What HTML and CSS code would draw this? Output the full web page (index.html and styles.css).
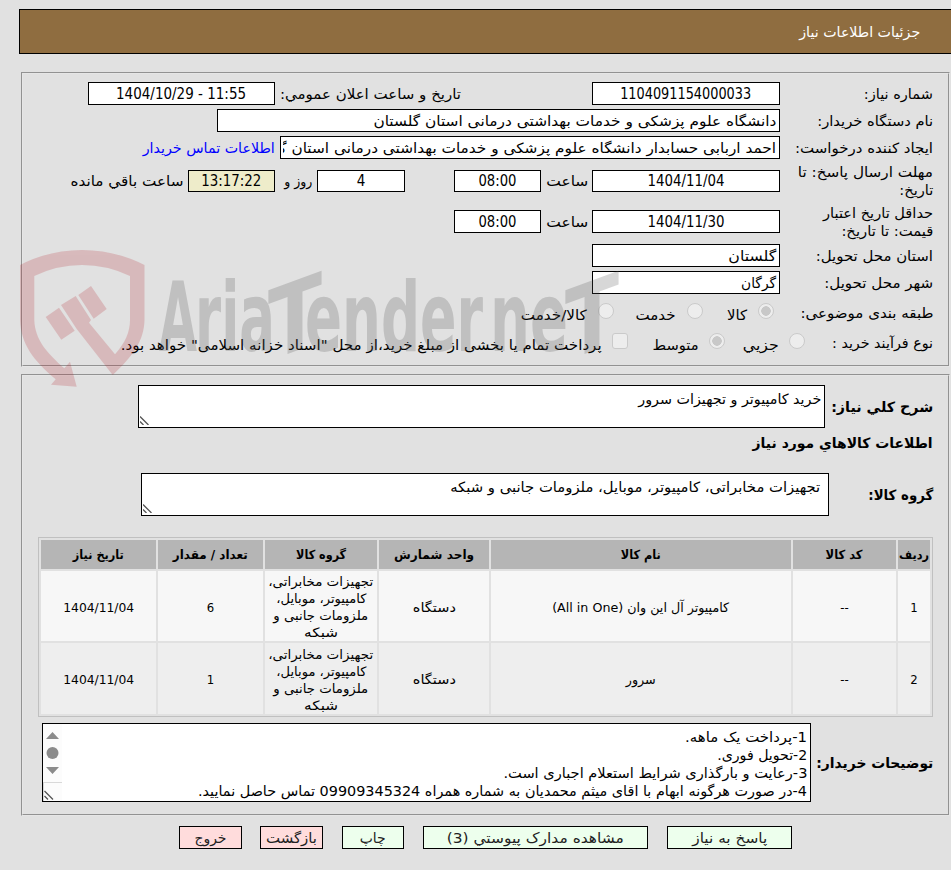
FILE: index.html
```html
<!DOCTYPE html>
<html lang="fa" dir="rtl">
<head>
<meta charset="utf-8">
<title>جزئیات اطلاعات نیاز</title>
<link rel="stylesheet" href="styles.css">
</head>
<body>
<header class="title-bar"><span class="fit" data-w="121">جزئیات اطلاعات نیاز</span></header>

<section class="panel general">
  <div class="row r1">
    <div class="label"><span class="fit" data-w="69">شماره نیاز:</span></div>
    <div class="box w188"><span class="fit" data-w="131">1104091154000033</span></div>
    <div class="caption w317 pr"><span class="fit" data-w="181">تاريخ و ساعت اعلان عمومي:</span></div>
    <div class="box w187"><span class="fit" data-w="130" dir="ltr">1404/10/29 - 11:55</span></div>
  </div>
  <div class="row r2">
    <div class="label"><span class="fit" data-w="116">نام دستگاه خریدار:</span></div>
    <div class="box start w563"><span class="fit" data-w="403">دانشگاه علوم پزشکی و خدمات بهداشتی درمانی استان گلستان</span></div>
  </div>
  <div class="row r3">
    <div class="label"><span class="fit" data-w="138">ایجاد کننده درخواست:</span></div>
    <div class="box start clip w500"><span class="fit" data-w="536">احمد اربابی حسابدار دانشگاه علوم پزشکی و خدمات بهداشتی درمانی استان گلستان</span></div>
    <a class="contact"><span class="fit" data-w="132">اطلاعات تماس خریدار</span></a>
  </div>
  <div class="row r4">
    <div class="label two"><span class="fit" data-w="135">مهلت ارسال پاسخ: تا</span><br><span class="fit" data-w="34">تاریخ:</span></div>
    <div class="box short w188"><span class="fit" data-w="77">1404/11/04</span></div>
    <div class="caption w51"><span class="fit" data-w="42">ساعت</span></div>
    <div class="box short w87"><span class="fit" data-w="38">08:00</span></div>
    <div class="box short w88 gap49"><span>4</span></div>
    <div class="caption w42 wide"><span class="fit" data-w="28">روز و</span></div>
    <div class="box short w87 timer"><span class="fit" data-w="60">13:17:22</span></div>
    <div class="caption wide"><span class="fit" data-w="113">ساعت باقي مانده</span></div>
  </div>
  <div class="row r5">
    <div class="label two"><span class="fit" data-w="110">حداقل تاریخ اعتبار</span><br><span class="fit" data-w="92">قیمت: تا تاریخ:</span></div>
    <div class="box w188"><span class="fit" data-w="77">1404/11/30</span></div>
    <div class="caption w51"><span class="fit" data-w="42">ساعت</span></div>
    <div class="box w87"><span class="fit" data-w="38">08:00</span></div>
  </div>
  <div class="row r6">
    <div class="label"><span class="fit" data-w="117">استان محل تحویل:</span></div>
    <div class="box start w188"><span class="fit" data-w="48">گلستان</span></div>
  </div>
  <div class="row r7">
    <div class="label"><span class="fit" data-w="109">شهر محل تحویل:</span></div>
    <div class="box start w188"><span class="fit" data-w="35">گرگان</span></div>
  </div>
  <div class="row r8">
    <div class="label choice"><span class="fit" data-w="133">طبقه بندی موضوعی:</span></div>
    <div class="option o1"><i class="radio on"></i><span class="fit" data-w="20">کالا</span></div>
    <div class="option o2"><i class="radio"></i><span class="fit" data-w="40">خدمت</span></div>
    <div class="option o3"><i class="radio"></i><span class="fit" data-w="66">کالا/خدمت</span></div>
  </div>
  <div class="row r9">
    <div class="label kind"><span class="fit" data-w="101">نوع فرآیند خرید :</span></div>
    <div class="option o4"><i class="radio"></i><span class="fit" data-w="36">جزيي</span></div>
    <div class="option o5"><i class="radio on"></i><span class="fit" data-w="46">متوسط</span></div>
    <div class="option o6"><i class="check"></i><span class="fit" data-w="481">پرداخت تمام یا بخشی از مبلغ خرید،از محل "اسناد خزانه اسلامی" خواهد بود.</span></div>
  </div>
</section>

<section class="panel items">
  <div class="row s1">
    <div class="heading"><span class="fit" data-w="102">شرح کلي نياز:</span></div>
    <div class="area a1"><span class="fit" data-w="183">خرید کامپیوتر و تجهیزات سرور</span>
      <svg class="grip" viewBox="0 0 9 9"><path d="M0 .5 8.500 9M0 5.500 3.500 9"/></svg></div>
  </div>
  <div class="row s2"><div class="heading"><span class="fit" data-w="180">اطلاعات کالاهاي مورد نیاز</span></div></div>
  <div class="row s3">
    <div class="heading group"><span class="fit" data-w="65">گروه کالا:</span></div>
    <div class="area a2"><span class="fit" data-w="370">تجهیزات مخابراتی، کامپیوتر، موبایل، ملزومات جانبی و شبکه</span>
      <svg class="grip" viewBox="0 0 9 9"><path d="M0 .5 8.500 9M0 5.500 3.500 9"/></svg></div>
  </div>
  <table class="goods">
    <colgroup><col class="c1"><col class="c2"><col class="c3"><col class="c4"><col class="c5"><col class="c6"><col class="c7"></colgroup>
    <thead><tr>
      <th><span class="fit" data-w="30">ردیف</span></th><th><span class="fit" data-w="37">کد کالا</span></th><th><span class="fit" data-w="40">نام کالا</span></th><th><span class="fit" data-w="80">واحد شمارش</span></th><th><span class="fit" data-w="50">گروه کالا</span></th><th><span class="fit" data-w="75">تعداد / مقدار</span></th><th><span class="fit" data-w="51">تاریخ نیاز</span></th>
    </tr></thead>
    <tbody>
      <tr><td>1</td><td>--</td><td><span class="fit" data-w="177">کامپیوتر آل این وان (All in One)</span></td><td><span class="fit" data-w="43">دستگاه</span></td>
        <td class="wrap"><span class="fit" data-w="105">تجهیزات مخابراتی،</span><br><span class="fit" data-w="90">کامپیوتر، موبایل،</span><br><span class="fit" data-w="95">ملزومات جانبی و</span><br><span class="fit" data-w="34">شبکه</span></td>
        <td>6</td><td><span class="fit" data-w="71">1404/11/04</span></td></tr>
      <tr><td>2</td><td>--</td><td><span class="fit" data-w="30">سرور</span></td><td><span class="fit" data-w="43">دستگاه</span></td>
        <td class="wrap"><span class="fit" data-w="105">تجهیزات مخابراتی،</span><br><span class="fit" data-w="90">کامپیوتر، موبایل،</span><br><span class="fit" data-w="95">ملزومات جانبی و</span><br><span class="fit" data-w="34">شبکه</span></td>
        <td>1</td><td><span class="fit" data-w="71">1404/11/04</span></td></tr>
    </tbody>
  </table>
  <div class="row s4">
    <div class="heading notes-label"><span class="fit" data-w="117">توضیحات خریدار:</span></div>
    <div class="area notes">
      <span class="fit" data-w="122">1-پرداخت یک ماهه.</span><br><span class="fit" data-w="90">2-تحویل فوری.</span><br><span class="fit" data-w="304">3-رعایت و بارگذاری شرایط استعلام اجباری است.</span><br><span class="fit" data-w="609">4-در صورت هرگونه ابهام با اقای میثم محمدیان به شماره همراه 09909345324 تماس حاصل نمایید.</span>
      <svg class="scroll" viewBox="0 0 19 77"><path class="track" d="M0 0H19V77H0Z"/><path class="edge" d="M0 58.500H19M.5 58V77"/><path class="thumb" d="M3 15 9.500 8 16 15ZM3 43 9.500 50 16 43Z"/><circle class="thumb" cx="9.500" cy="29" r="6"/><path class="lines" d="M1.500 67 10 75.500M1.500 72 5 75.500"/></svg>
    </div>
  </div>
</section>

<nav class="actions">
  <button class="b1"><span class="fit" data-w="75">پاسخ به نیاز</span></button>
  <button class="b2"><span class="fit" data-w="177">مشاهده مدارک پیوستي (3)</span></button>
  <button class="b3"><span class="fit" data-w="26">چاپ</span></button>
  <button class="b4 red"><span class="fit" data-w="51">بازگشت</span></button>
  <button class="b5 red"><span class="fit" data-w="32">خروج</span></button>
</nav>

<svg class="watermark" viewBox="0 0 610 145" direction="ltr">
  <g class="shield">
    <path d="M-1 16Q28 1 61 1T123.500 16V71C123 92 112 107 91.700 126L55.700 80 40 56 54.700 47 70 71 68 73.700 94 105.300C104 94 109 83 109 71V27Q86 16 61 16T13.300 27V71C14 91 26 104 43.300 119.300L49 112.700 55.700 137.700 30 135.700 34.700 130.300C12 111 0 95-1 71Z"/>
    <path d="M24.700 68 38 58.700 53.700 81.700 40.300 90.700ZM57.300 46 70 37 85.700 60 72.700 69.700Z"/>
  </g>
  <g class="wordmark">
    <text x="138" y="102" textLength="38" lengthAdjust="spacingAndGlyphs">A</text>
    <text x="174" y="102" textLength="80" lengthAdjust="spacingAndGlyphs">ria</text>
    <text transform="translate(247 112) skewY(-20)" textLength="54" lengthAdjust="spacingAndGlyphs">T</text>
    <text x="284" y="102" textLength="115" lengthAdjust="spacingAndGlyphs">end</text>
    <text x="399" y="102" textLength="63" lengthAdjust="spacingAndGlyphs">er</text>
    <text x="469" y="102" textLength="78" lengthAdjust="spacingAndGlyphs">ne</text>
    <text transform="translate(544 112) skewY(-20)" textLength="54" lengthAdjust="spacingAndGlyphs">T</text>
  </g>
</svg>
<script src="fit.js"></script>
</body>
</html>
```
FILE: styles.css
```css
* { box-sizing: border-box; }
body { margin: 0; width: 951px; height: 870px; overflow: hidden; padding: 9px 0 0; position: relative; background: #e1e1e1; color: #000; font: 14px/18px "DejaVu Sans Condensed", "DejaVu Sans", sans-serif; }
.fit { display: inline-block; white-space: nowrap; transform-origin: right center; }
.title-bar { height: 45px; margin-right: 0; margin-left: 19px; padding: 13px 31px 0 0; border: 1px solid #000; border-right: 0; background: #8f6d40; color: #fff; }
.panel { margin: 0 1px 0 21px; border: 2px groove #e6e6e6; padding: 0 15px 0 0; }
.general { height: 295px; margin-top: 18px; padding-top: 8px; }
.items { height: 442px; margin-top: 7px; padding-top: 9px; }
.row { display: flex; align-items: center; white-space: nowrap; }
.r1, .r2, .r3, .r6 { height: 23px; margin-bottom: 4px; }
.r4 { height: 36px; margin-bottom: 1px; }
.r5 { height: 43px; margin-bottom: 1px; }
.r7 { height: 23px; }
.r8 { height: 38px; }
.r9 { height: 22px; }
.label { flex: none; width: 153px; }
.label.choice { width: 159px; }
.label.kind { width: 128px; }
.box { flex: none; height: 23px; border: 1px solid #000; background: #fff; display: flex; justify-content: center; align-items: center; font-size: 15px; }
.box.short { height: 22px; }
.box .fit, th .fit, td .fit, button .fit { transform-origin: center; }
.box.start { justify-content: flex-start; padding-right: 3px; font-size: 14px; }
.box.start .fit { transform-origin: right center; }
.box.clip { overflow: clip; overflow-clip-margin: content-box; padding-left: 2px; }
.box.timer { background: #eeecca; }
.w51 { width: 51px; } .w42 { width: 42px; } .w87 { width: 87px; } .w88 { width: 88px; } .w187 { width: 187px; } .w188 { width: 188px; } .w317 { width: 317px; } .w500 { width: 500px; } .w563 { width: 563px; }
.gap49 { margin-right: 49px; }
.caption { flex: none; padding-right: 4px; }
.caption.wide { padding-right: 5px; }
.caption.pr { padding-right: 131px; }
.contact { color: #00f; padding-right: 5px; }
.option { flex: none; display: flex; align-items: center; gap: 11px; }
.r9 .option { gap: 10px; }
.option .fit { position: relative; top: 2px; }
.o1 { width: 71px; } .o2 { width: 89px; } .o3 { width: 120px; }
.o4 { width: 80px; } .o5 { width: 97px; } .o6 { width: 520px; }
.radio, .check { flex: none; position: relative; top: -2px; width: 16px; height: 16px; border: 1px solid #cacaca; border-radius: 50%; background: #ededed; }
.radio.on { background: radial-gradient(circle, #c8c8c8 0 4.500px, #ededed 5px); }
.check { border-radius: 3px; }
.heading { flex: none; width: 108px; font-weight: bold; }
.heading.group { width: 104px; }
.heading.notes-label { width: 122px; }
.area { flex: none; position: relative; height: 43px; border: 1px solid #000; background: #fff; padding: 4px 3px 0 0; }
.s1 { height: 43px; }
.s2 { height: 30px; }
.s3 { height: 43px; margin: 15px 0 21px; }
.a1 { width: 687px; }
.a2 { width: 688px; padding-right: 8px; }
.grip { position: absolute; left: 1px; bottom: 2px; width: 9px; height: 9px; fill: none; stroke: #555; stroke-width: 1.300; }
.goods { width: 895px; height: 180px; table-layout: fixed; border: 1px solid #c0c0c0; border-spacing: 2px; border-collapse: separate; font-size: 13px; line-height: 17px; text-align: center; }
.c1 { width: 32px; } .c2 { width: 103px; } .c3 { width: 300px; } .c4 { width: 110px; } .c5 { width: 112px; } .c6 { width: 105px; } .c7 { width: 115px; }
th, td { padding: 0; white-space: nowrap; }
th { height: 29px; background: #b5b5b5; font-size: 12.500px; }
td { height: 70px; padding-top: 2px; background: #f7f7f7; }
tr:nth-child(2) td { height: 71px; background: #eee; }
td.wrap .fit { vertical-align: top; }
.s4 { margin-top: 6px; height: 79px; }
.notes { width: 769px; height: 79px; }
.scroll { position: absolute; left: 0; top: 0; width: 19px; height: 77px; }
.track { fill: #fcfcfc; } .edge { stroke: #d9d9d9; } .thumb { fill: #8b8b8b; } .lines { stroke: #555; stroke-width: 1.300; }
.actions { display: flex; margin-top: 10px; padding-right: 159px; }
.actions button { flex: none; height: 23px; padding: 0; border: 1px solid #000; background: #edffed; color: #222; font: inherit; display: flex; justify-content: center; align-items: center; }
.actions button.red { background: #ffdcdc; }
.b1 { width: 125px; } .b2 { width: 225px; margin-right: 19px; } .b3 { width: 62px; margin-right: 19px; } .b4 { width: 63px; margin-right: 19px; } .b5 { width: 63px; margin-right: 18px; }
.watermark { position: absolute; left: 21px; top: 249px; width: 610px; height: 145px; overflow: visible; pointer-events: none; }
.shield { fill: #b4202a; opacity: .2; }
.wordmark { fill: #555; opacity: .23; font: bold 97px "DejaVu Sans Condensed", sans-serif; }
```
FILE: fit.js
```js
document.querySelectorAll('.fit').forEach(function (el) {
  el.style.transform = 'scaleX(' + (el.dataset.w / el.getBoundingClientRect().width) + ')';
});
```
